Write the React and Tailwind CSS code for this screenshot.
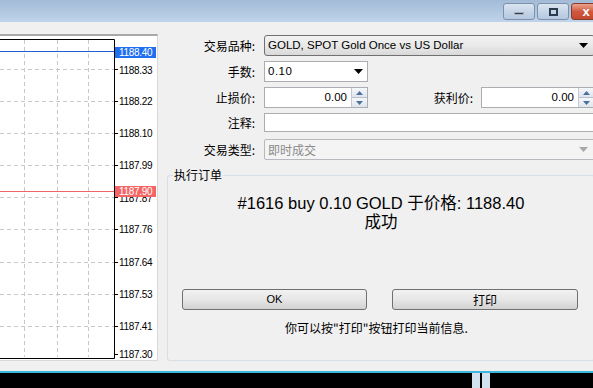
import React from 'react';

const cjk = { fontFamily: '"Noto Sans CJK SC", "Liberation Sans", sans-serif' };
const latin = { fontFamily: '"Liberation Sans", "Noto Sans CJK SC", sans-serif' };

const gridY = [33, 65, 97, 129, 161, 193, 226, 258, 290];
const labels = [
  ['1188.33', 34],
  ['1188.22', 65],
  ['1188.10', 97],
  ['1187.99', 129],
  ['1187.87', 162],
  ['1187.76', 193],
  ['1187.64', 226],
  ['1187.53', 258],
  ['1187.41', 290],
  ['1187.30', 318],
];

const PriceChart = () => (
  <svg width="157" height="325" className="block" style={latin}>
    {[24, 57, 88].map((x) => (
      <line key={x} x1={x + 0.5} y1="4" x2={x + 0.5} y2="321" stroke="#c8c8c8" strokeDasharray="4 3" />
    ))}
    {gridY.map((y) => (
      <line key={y} x1="0" y1={y + 0.5} x2="114" y2={y + 0.5} stroke="#c8c8c8" strokeDasharray="4 3" />
    ))}
    <line x1="0" y1="3.5" x2="114.5" y2="3.5" stroke="#000" />
    <line x1="114.5" y1="3.5" x2="114.5" y2="322.5" stroke="#000" />
    <line x1="0" y1="322.5" x2="114.5" y2="322.5" stroke="#000" />
    {gridY.concat([318]).map((y) => (
      <line key={'t' + y} x1="114" y1={y + 0.5} x2="118" y2={y + 0.5} stroke="#000" />
    ))}
    {labels.map(([t, y]) => (
      <text key={t} x="119" y={y + 4} fontSize="10" fill="#000" letterSpacing="-0.3">
        {t}
      </text>
    ))}
    <line x1="0" y1="15.5" x2="114" y2="15.5" stroke="#1f5fd6" />
    <rect x="115" y="11" width="41" height="11" fill="#1f6ff0" />
    <text x="119" y="20" fontSize="10" fill="#fff" letterSpacing="-0.3">1188.40</text>
    <line x1="0" y1="155.5" x2="114" y2="155.5" stroke="#f06464" />
    <rect x="115" y="150" width="41" height="11" fill="#f46666" />
    <text x="119" y="159" fontSize="10" fill="#fff" letterSpacing="-0.3">1187.90</text>
  </svg>
);

const DownArrow = ({ color = '#000' }) => (
  <svg width="9" height="5" viewBox="0 0 9 5">
    <path d="M0 0h9L4.5 5z" fill={color} />
  </svg>
);

const Spinner = () => (
  <div className="flex flex-col w-[16px] h-full border-l border-[#c4c8cf]">
    <div className="flex-1 flex items-center justify-center bg-gradient-to-b from-[#f5f7fa] to-[#dfe5ee] border-b border-[#b8bfc9]">
      <svg width="7" height="4" viewBox="0 0 7 4"><path d="M3.5 0L7 4H0z" fill="#4d6f9e" /></svg>
    </div>
    <div className="flex-1 flex items-center justify-center bg-gradient-to-b from-[#f5f7fa] to-[#dfe5ee]">
      <svg width="7" height="4" viewBox="0 0 7 4"><path d="M0 0h7L3.5 4z" fill="#4d6f9e" /></svg>
    </div>
  </div>
);

const Label = ({ children, w = 'w-[99px]' }) => (
  <div className={`${w} shrink-0 text-right text-[12px] text-black pr-[2px]`} style={cjk}>
    {children}
  </div>
);

const WinBtn = ({ children, red }) => (
  <div
    className={`h-[17px] rounded-[3px] border flex items-center justify-center ${
      red
        ? 'w-[30px] border-[#8a3a2a] bg-gradient-to-b from-[#e9a48f] via-[#d0583f] to-[#c44a30]'
        : 'w-[32px] border-[#7d91ab] bg-gradient-to-b from-[#dbe5f1] via-[#c6d5e7] to-[#b4c8df]'
    }`}
  >
    {children}
  </div>
);

const App = () => {
  return (
    <div className="w-[593px] h-[388px] overflow-hidden flex flex-col bg-[#f0f0f0]">
      <div className="h-[22px] shrink-0 bg-gradient-to-b from-[#a3bbd7] to-[#bfd4ea] flex items-start justify-end gap-[2px] pt-[3px] pl-2 -mr-[8px]">
        <WinBtn>
          <div className="w-[10px] h-[3px] bg-[#2b3b50] border border-white/60 mt-[4px]" />
        </WinBtn>
        <WinBtn>
          <div className="w-[9px] h-[8px] border-2 border-[#2b3b50]" />
        </WinBtn>
        <WinBtn red>
          <span className="text-white font-bold text-[13px] leading-none" style={latin}>x</span>
        </WinBtn>
      </div>

      <div className="flex-1 flex min-h-0">
        <div className="w-[158px] shrink-0 pt-[12px]">
          <div className="h-[327px] bg-white border-t-2 border-[#a8a8a8] border-r border-r-[#d9d9d9] border-b border-b-[#d9d9d9]">
            <PriceChart />
          </div>
        </div>

        <div className="flex-1 flex flex-col pr-[7px]">
          <div className="flex items-center mt-[13px] h-[21px]">
            <Label>交易品种:</Label>
            <div className="ml-[7px] flex-1 h-full rounded-[3px] border border-[#707070] bg-gradient-to-b from-[#f3f3f3] via-[#e9e9e9] to-[#d9d9d9] flex items-center pl-[3px] pr-[6px]">
              <span className="flex-1 text-[11.5px] text-black" style={latin}>GOLD, SPOT Gold Once vs US Dollar</span>
              <DownArrow />
            </div>
          </div>

          <div className="flex items-center mt-[5px] h-[21px]">
            <Label>手数:</Label>
            <div className="ml-[7px] w-[104px] h-full border border-[#abadb3] bg-white flex items-center pl-[3px] pr-[4px]">
              <span className="flex-1 text-[11.5px] text-black tracking-[0.5px]" style={latin}>0.10</span>
              <DownArrow />
            </div>
          </div>

          <div className="flex items-center mt-[5px] h-[21px]">
            <Label>止损价:</Label>
            <div className="ml-[7px] w-[104px] h-full border border-[#abadb3] bg-white flex items-center">
              <span className="flex-1 text-right pr-[4px] text-[11.5px] text-black" style={latin}>0.00</span>
              <Spinner />
            </div>
            <Label w="w-[107px]">获利价:</Label>
            <div className="ml-[6px] flex-1 h-full border border-[#abadb3] bg-white flex items-center">
              <span className="flex-1 text-right pr-[4px] text-[11.5px] text-black" style={latin}>0.00</span>
              <Spinner />
            </div>
          </div>

          <div className="flex items-center mt-[5px] h-[19px]">
            <Label>注释:</Label>
            <div className="ml-[7px] flex-1 h-full border border-[#abadb3] bg-white" />
          </div>

          <div className="flex items-center mt-[7px] h-[21px]">
            <Label>交易类型:</Label>
            <div className="ml-[7px] flex-1 h-full rounded-[2px] border border-[#b6b9bd] bg-[#f4f4f4] flex items-center pl-[3px] pr-[6px]">
              <span className="flex-1 text-[12px] text-[#8a8a8a]" style={cjk}>即时成交</span>
              <DownArrow color="#a8a8a8" />
            </div>
          </div>

          <fieldset className="mt-[7px] ml-[9px] w-[428px] h-[194px] border border-[#d5dfe5] rounded-[3px] shrink-0">
            <legend className="ml-[5px] px-[1px] text-[12px] text-black leading-[16px]" style={cjk}>执行订单</legend>
            <div className="mt-[11px] text-center text-[16.5px] leading-[19px] text-black" style={latin}>
              <div>#1616 buy 0.10 GOLD 于价格: 1188.40</div>
              <div>成功</div>
            </div>
            <div className="mt-[57px] flex pl-[14px] gap-[25px]">
              <button className="w-[185px] h-[21px] rounded-[3px] border border-[#707070] bg-gradient-to-b from-[#f2f2f2] via-[#e6e6e6] to-[#d2d2d2] text-[11px] text-black" style={latin}>
                OK
              </button>
              <button className="w-[186px] h-[21px] rounded-[3px] border border-[#707070] bg-gradient-to-b from-[#f2f2f2] via-[#e6e6e6] to-[#d2d2d2] text-[12px] text-black" style={cjk}>
                打印
              </button>
            </div>
            <div className="mt-[10px] pl-[117px] text-[12px] leading-[16px] text-black" style={cjk}>
              你可以按"打印"按钮打印当前信息.
            </div>
          </fieldset>
        </div>
      </div>

      <div className="h-[2px] shrink-0 bg-[#3bb6dc]" />
      <div className="h-[15px] shrink-0 bg-black flex pl-[472px] gap-[2px]">
        <div className="w-[8px] h-full bg-[#d3e1ef]" />
        <div className="w-[8px] h-full bg-[#d3e1ef]" />
      </div>
    </div>
  );
};

export default App;
